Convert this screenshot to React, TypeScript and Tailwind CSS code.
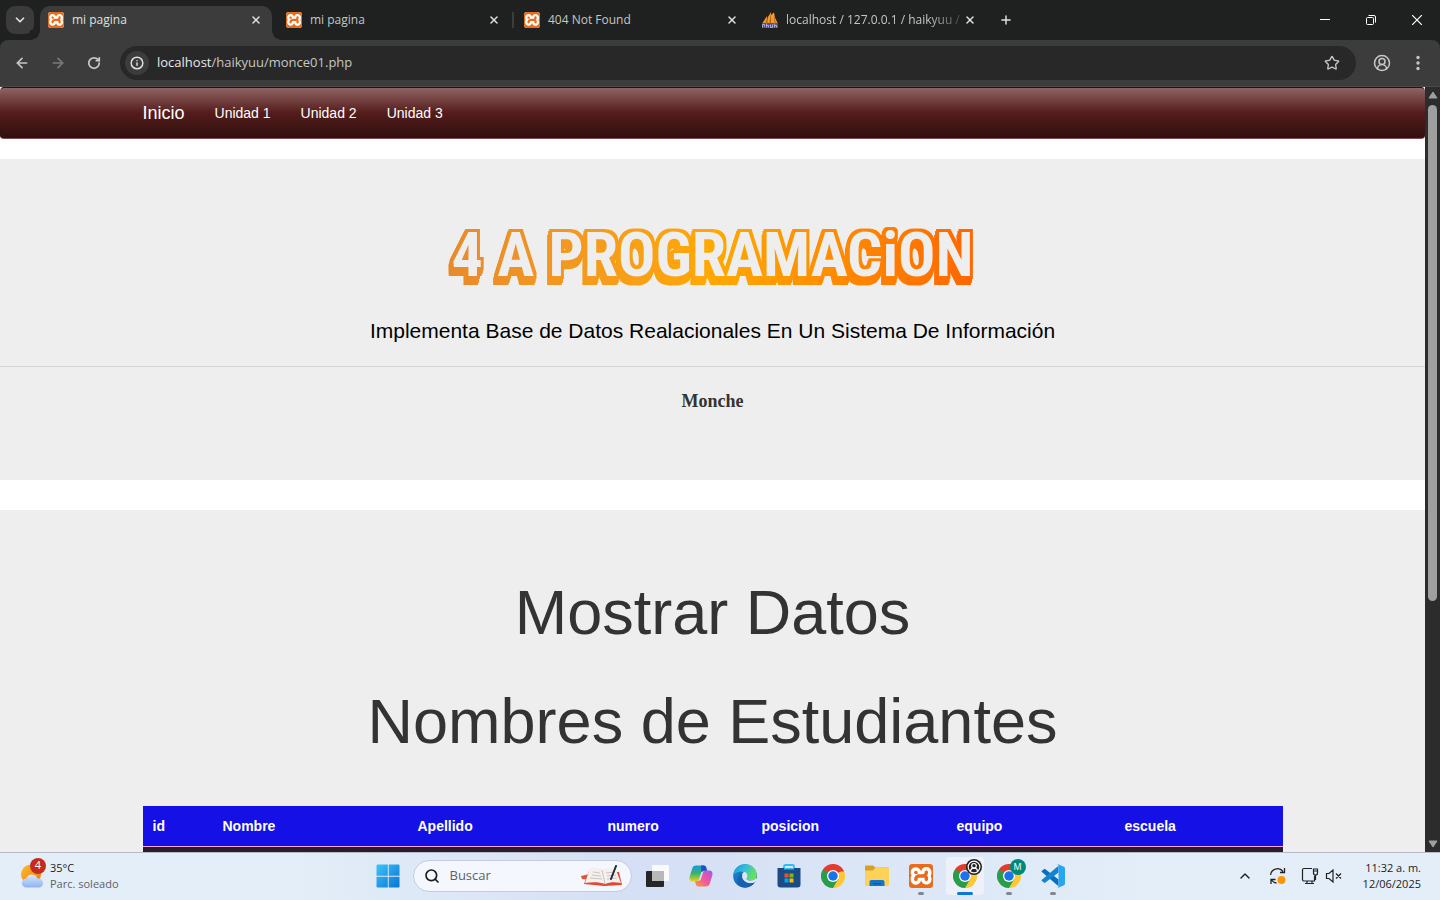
import type { ReactNode } from "react";
import {
  ArrowLeft,
  ArrowRight,
  ChevronDown,
  ChevronUp,
  CircleUserRound,
  Info,
  Plus,
  RotateCw,
  Search,
  Star,
  X,
} from "lucide-react";
import { SiXampp } from "react-icons/si";

const ui = "font-['Open_Sans','Noto_Sans',sans-serif]";

function XamppIcon({ className }: { className: string }) {
  return (
    <span className={`${className} block shrink-0 overflow-hidden rounded-[3px] bg-white`}>
      <SiXampp className="size-full scale-120 text-[#ea6c1b]" />
    </span>
  );
}

function SailIcon() {
  return (
    <svg viewBox="0 0 16 16" className="size-4 shrink-0">
      <path d="M.5 11 5 4l.5 7zM5 11l1-6 3-5v11zM9 11V3l3-2.500 1 5 2.500 5.500z" fill="#f29a2e" />
      <path d="m3.500 11 2-6v6zm4 0L9 0v11zm5 0L12 .5l1.500 10.500z" fill="#a8611a" />
      <path d="M0 11h16v5H0z" fill="#4d5092" />
      <path d="M.5 15.500v-3h2v2m2-3v4m0-2h2v2m2-3v3h2v-3m2 3v-4m0 2h2v2" fill="none" stroke="#a9abd3" />
    </svg>
  );
}

function ChromeIcon() {
  return (
    <svg viewBox="0 0 48 48" className="size-6">
      <path d="M24 24 3.200 12A24 24 0 0 1 44.800 12z" fill="#e33b2e" />
      <path d="M24 24 44.800 12A24 24 0 0 1 24 48z" fill="#fcc934" />
      <path d="M24 24v24A24 24 0 0 1 3.200 12z" fill="#2a9d4b" />
      <path d="M24 12h20.800a24 24 0 0 1 1.200 3H24z" fill="#e33b2e" />
      <path d="M34.400 30 24 48a24 24 0 0 0 3-.2l7.400-11z" fill="#fcc934" />
      <path d="M34.400 30 24 48l-5-12 9-4z" fill="#2a9d4b" />
      <path d="M13.600 30 3.200 12 16 15l1 10z" fill="#2a9d4b" />
      <circle cx="24" cy="24" r="12" fill="#fff" />
      <circle cx="24" cy="24" r="9.500" fill="#1a73e8" />
    </svg>
  );
}

function WindowsIcon() {
  return (
    <svg viewBox="0 0 24 24" className="size-6">
      <defs>
        <linearGradient id="win" x1="0" y1="0" x2="1" y2="1" gradientUnits="objectBoundingBox">
          <stop offset="0" stopColor="#3cc4f7" />
          <stop offset="1" stopColor="#0a73d3" />
        </linearGradient>
      </defs>
      <path
        d="M1.500.5h10.300v11.300H.5V1.500a1 1 0 0 1 1-1zM12.700.5h9.800a1 1 0 0 1 1 1v10.300H12.700zM.5 12.700h11.300v10.800H1.500a1 1 0 0 1-1-1zM12.700 12.700h10.800v9.800a1 1 0 0 1-1 1h-9.800z"
        fill="url(#win)"
      />
    </svg>
  );
}

function TaskViewIcon() {
  return (
    <svg viewBox="0 0 24 24" className="size-6">
      <rect x="1" y="7" width="18" height="16" rx="1" fill="#262626" />
      <rect x="7" y="1" width="17" height="16" rx="1" fill="#fafafa" />
      <path d="M7 7h12v10H7z" fill="#b8b8b8" />
    </svg>
  );
}

function CopilotIcon() {
  return (
    <svg viewBox="0 0 24 24" className="size-6">
      <defs>
        <linearGradient id="cpA" x1="0" y1="0" x2="0" y2="1">
          <stop offset="0" stopColor="#1699e0" />
          <stop offset=".5" stopColor="#35b56a" />
          <stop offset="1" stopColor="#f5cf21" />
        </linearGradient>
        <linearGradient id="cpB" x1="1" y1="0" x2="0" y2="1">
          <stop offset="0" stopColor="#a05be8" />
          <stop offset=".5" stopColor="#f0569d" />
          <stop offset="1" stopColor="#ff9a3c" />
        </linearGradient>
      </defs>
      <path d="M7.500 1.500h7c2 0 2.500 1 3 3l.6 2.500h-3c-2 0-2.800 1-3.300 2.700L10 15.500c-.6 1.700-1.500 2-3 2H4c-3 0-4-2-3.300-5L3 5c.7-2.500 2-3.500 4.500-3.500z" fill="url(#cpA)" />
      <path d="M12 1.500h2.500c2 0 2.500 1 3 3l.6 2.500h-3c-1.300 0-2.100.4-2.700 1.200z" fill="#1b50c8" />
      <path d="M16.500 22.500h-7c-2 0-2.500-1-3-3L6 17h3c2 0 2.700-1 3.200-2.700L14 8.500c.6-1.700 1.500-2 3-2h3c3 0 4 2 3.300 5L21 19c-.7 2.500-2 3.500-4.500 3.500z" fill="url(#cpB)" />
    </svg>
  );
}

function EdgeIcon() {
  return (
    <svg viewBox="0 0 24 24" className="size-6">
      <defs>
        <linearGradient id="edA" x1="0" y1="0" x2="1" y2=".4">
          <stop offset="0" stopColor="#2291dc" />
          <stop offset=".5" stopColor="#2fc0dc" />
          <stop offset="1" stopColor="#6be05a" />
        </linearGradient>
        <linearGradient id="edB" x1="0" y1="0" x2="1" y2="1">
          <stop offset="0" stopColor="#1b8ede" />
          <stop offset="1" stopColor="#114a8b" />
        </linearGradient>
      </defs>
      <circle cx="12" cy="12" r="11.800" fill="url(#edB)" />
      <path d="M.3 11C1 4.500 6 .2 12 .2c7 0 11.800 5 11.800 10.300 0 4-3 6-6 6-2.500 0-4.300-.8-4.300-1.800 0-.8 1.200-1.200 1.200-3C14.700 9 12 7.500 8.800 7.500 5 7.500 2 9 .3 11z" fill="url(#edA)" />
      <path d="M8.800 7.500c3.200 0 5.900 1.500 5.900 4.200 0 1.800-1.200 2.200-1.200 3 0 1 1.800 1.800 4.300 1.800 2 0 3.600-.7 4.800-2.200l1.500.2-2 4c-6 2.500-13.600-.5-13.600-6 0-2 1-3.700 2.500-4.500z" fill="#dbe5f7" />
      <path d="M9.500 9.500c-2 4.500 2 9.500 7.500 9.700 2 .1 3.500-.4 4.700-1.200C18 23.500 12 24 9 22.500 3 20 3.500 11.500 9.500 9.500z" fill="#1661b3" />
    </svg>
  );
}

function StoreIcon() {
  return (
    <svg viewBox="0 0 24 24" className="size-6">
      <path d="M7 6V2.500a1.500 1.500 0 0 1 1.500-1.500h7A1.500 1.500 0 0 1 17 2.500V6" fill="none" stroke="#32bdf2" strokeWidth="1.800" />
      <path d="M.5 4h23v16.500a3 3 0 0 1-3 3h-17a3 3 0 0 1-3-3z" fill="#1a4b84" />
      <path d="M7 4h10v1.500H7z" fill="#32bdf2" />
      <path d="M7.500 9.500h4v4h-4z" fill="#f25022" />
      <path d="M12.500 9.500h4v4h-4z" fill="#7fba00" />
      <path d="M7.500 14.500h4v4h-4z" fill="#00a4ef" />
      <path d="M12.500 14.500h4v4h-4z" fill="#ffb900" />
    </svg>
  );
}

function FolderIcon() {
  return (
    <svg viewBox="0 0 24 24" className="size-6">
      <path d="M0 2.500a1 1 0 0 1 1-1h7l2.500 2H23a1 1 0 0 1 1 1V10H0z" fill="#d9a020" />
      <path d="M0 6.500h8l2.500-3H23a1 1 0 0 1 1 1V21a1 1 0 0 1-1 1H1a1 1 0 0 1-1-1z" fill="#fdd258" />
      <path d="M4.500 22v-4a2 2 0 0 1 2-2h11a2 2 0 0 1 2 2v4z" fill="#1476c6" />
      <path d="M8 19h8v1.200H8z" fill="#0e5598" />
    </svg>
  );
}

function CodeIcon() {
  return (
    <svg viewBox="0 0 24 24" className="size-6">
      <path d="m1.600 6.300 1.500-1.200c.3-.2.700-.2 1 0L17.500 15.500v6.800L.9 8.100c-.5-.5-.5-1.200.7-1.800z" fill="#0a6ebd" />
      <path d="m1.600 17.500 1.500 1.300c.3.200.7.200 1 0L17.500 8.500V1.700L.9 15.800c-.5.500-.5 1.100.7 1.700z" fill="#1583d0" />
      <path d="M17.300.3 23 2.800c.6.300 1 .9 1 1.600v15.200c0 .7-.4 1.300-1 1.600l-5.700 2.500c-.6.300-1 0-1.300-.3.800.4 1.500-.2 1.500-1V1.600c0-.9-.8-1.400-1.500-1 .3-.4.800-.6 1.300-.3z" fill="#2aa5f0" />
    </svg>
  );
}

function BookIcon() {
  return (
    <svg viewBox="0 0 42 22" className="h-[22px] w-[42px]">
      <path d="m0 11 9-2 6 3-7 3-7-1z" fill="#e0533a" />
      <path d="m8 6 30 1 3 13-18 1-20-2z" fill="#e2492f" />
      <path d="M9 3c5-1 9 0 12 2 4-2 10-2 14 0l5 13c-6-1-11-1-16 1-5-2-13-2-20-1z" fill="#f4f0ec" />
      <path d="m21 5 3 14M12 7l7 1M11 10l9 1M9 13l12 1M25 8l8-1M26 11l9-1M26 14l10-1" fill="none" stroke="#c9c4ca" />
      <path d="m35 1-5 13" stroke="#26282e" strokeWidth="2" strokeLinecap="round" />
    </svg>
  );
}

function WeatherIcon() {
  return (
    <svg viewBox="0 0 24 24" className="size-6">
      <defs>
        <linearGradient id="sun" x1="0" y1="0" x2="1" y2="1">
          <stop offset="0" stopColor="#fdbb2c" />
          <stop offset="1" stopColor="#f1780f" />
        </linearGradient>
        <linearGradient id="cloud" x1="0" y1="0" x2="0" y2="1">
          <stop offset="0" stopColor="#d6e6fc" />
          <stop offset="1" stopColor="#8fb3ee" />
        </linearGradient>
      </defs>
      <circle cx="11" cy="10.500" r="10" fill="url(#sun)" />
      <path d="M6.500 23.500a4.500 4.500 0 0 1-.3-9 6 6 0 0 1 11.300 0h1a4.500 4.500 0 0 1 0 9z" fill="url(#cloud)" />
    </svg>
  );
}

const tabs = [
  { title: "mi pagina", icon: <XamppIcon className="size-4" /> },
  { title: "mi pagina", icon: <XamppIcon className="size-4" /> },
  { title: "404 Not Found", icon: <XamppIcon className="size-4" /> },
  { title: "localhost / 127.0.0.1 / haikyuu /", icon: <SailIcon /> },
];

function TabStrip() {
  return (
    <header className="flex h-10 shrink-0 items-start bg-[#1f2120] pl-1.5 text-[#dfe1df]">
      <button aria-label="Buscar pestañas" className="mt-1.5 grid size-7 place-items-center rounded-[9px] bg-[#3a3b3a]">
        <ChevronDown className="size-3.5" strokeWidth={3} />
      </button>
      <div className="ml-1.5 flex h-10 gap-1.5 pt-1.5">
        {tabs.map((tab, i) => (
          <div
            key={i}
            className={`relative flex w-[232px] items-center px-2 pb-1.5 ${
              i === 0 ? "rounded-t-[10px] bg-[#3c3c3c]" : ""
            }`}
          >
            {i === 0 && (
              <>
                <span className="absolute bottom-0 -left-2.5 size-2.5 bg-[radial-gradient(circle_at_0_0,#1f2120_10px,#3c3c3c_10px)]" />
                <span className="absolute -right-2.5 bottom-0 size-2.5 bg-[radial-gradient(circle_at_100%_0,#1f2120_10px,#3c3c3c_10px)]" />
              </>
            )}
            {i === 2 && <span className="absolute top-1.5 -left-1 h-4 w-0.5 bg-[#3c3d3c]" />}
            {tab.icon}
            <span
              className={`ml-2 flex-1 text-xs whitespace-nowrap ${
                i === 3 ? "[mask-image:linear-gradient(to_right,#000_80%,#0003)]" : ""
              } ${i === 0 ? "" : "text-[#c4c7c4]"}`}
            >
              {tab.title}
            </span>
            <button aria-label="Cerrar pestaña" className="grid size-4 place-items-center">
              <X className="size-3" strokeWidth={3} />
            </button>
          </div>
        ))}
      </div>
      <button aria-label="Nueva pestaña" className="grid h-10 w-10 place-items-center">
        <Plus className="size-3.5" strokeWidth={2.5} />
      </button>
      <div className="ml-auto flex text-white">
        <button aria-label="Minimizar" className="grid h-10 w-[46px] place-items-center">
          <svg viewBox="0 0 10 10" className="size-2.5"><path d="M0 4.500h10" stroke="currentColor" /></svg>
        </button>
        <button aria-label="Restaurar" className="grid h-10 w-[46px] place-items-center">
          <svg viewBox="0 0 10 10" className="size-2.5" fill="none" stroke="currentColor">
            <rect x=".5" y="2.500" width="7" height="7" rx="1" />
            <path d="M2.500.5H8a1.500 1.500 0 0 1 1.500 1.500v5.500" />
          </svg>
        </button>
        <button aria-label="Cerrar" className="grid h-10 w-[46px] place-items-center">
          <svg viewBox="0 0 10 10" className="size-2.5"><path d="m0 0 10 10M10 0 0 10" stroke="currentColor" strokeWidth="1.200" /></svg>
        </button>
      </div>
    </header>
  );
}

function Toolbar() {
  return (
    <div className="shrink-0 bg-[#1f2120]">
      <div className="flex h-[47px] items-center rounded-t-lg border-b border-[#4a4a4a] bg-[#3c3c3c] px-1 text-[#c7c7c7]">
        <button aria-label="Atrás" className="grid size-9 place-items-center">
          <ArrowLeft className="size-4" strokeWidth={2.5} />
        </button>
        <button aria-label="Adelante" className="grid size-9 place-items-center text-[#7b7b7b]">
          <ArrowRight className="size-4" strokeWidth={2.5} />
        </button>
        <button aria-label="Recargar" className="grid size-9 place-items-center">
          <RotateCw className="size-3.5" strokeWidth={3} />
        </button>
        <div className="ml-2 flex h-[34px] flex-1 items-center rounded-full bg-[#282828] pl-[5px]">
          <button aria-label="Información del sitio" className="grid size-6 place-items-center rounded-full bg-[#3c3c3c]">
            <Info className="size-3.5 text-[#e0e0e0]" strokeWidth={2.5} />
          </button>
          <p className="ml-2 flex-1 text-[13px] text-[#c7c7c7]">
            <span className="text-[#e8e8e8]">localhost</span>/haikyuu/monce01.php
          </p>
          <button aria-label="Agregar a marcadores" className="mr-2 grid size-8 place-items-center">
            <Star className="size-4" strokeWidth={2} />
          </button>
        </div>
        <button aria-label="Perfil" className="ml-2 grid size-9 place-items-center">
          <CircleUserRound className="size-[18px]" strokeWidth={2} />
        </button>
        <button aria-label="Menú" className="grid size-9 place-items-center">
          <svg viewBox="0 0 4 16" className="h-4 w-1" fill="currentColor">
            <circle cx="2" cy="2.500" r="1.700" />
            <circle cx="2" cy="8" r="1.700" />
            <circle cx="2" cy="13.500" r="1.700" />
          </svg>
        </button>
      </div>
    </div>
  );
}

const columns = [
  { name: "id", width: "w-[70px]" },
  { name: "Nombre", width: "w-[195px]" },
  { name: "Apellido", width: "w-[190px]" },
  { name: "numero", width: "w-[154px]" },
  { name: "posicion", width: "w-[195px]" },
  { name: "equipo", width: "w-[168px]" },
  { name: "escuela", width: "w-[168px]" },
];

function Page() {
  return (
    <main className="min-w-0 flex-1 overflow-hidden bg-white font-['Liberation_Sans',Arial,sans-serif] text-[#333]">
      <nav className="rounded border border-x-transparent border-t-[#2a1010] border-b-[#7d4b4b] bg-linear-to-b from-[#8f6363] via-[#541c1c] to-[#30100f] text-white">
        <div className="mx-auto flex h-[50px] w-full max-w-[1140px] items-center gap-[30px] text-sm">
          <a href="#inicio" className="text-lg">Inicio</a>
          <a href="#unidad1">Unidad 1</a>
          <a href="#unidad2">Unidad 2</a>
          <a href="#unidad3">Unidad 3</a>
        </div>
      </nav>

      <section className="mt-5 bg-[#eee] pt-[68px] pb-16 text-center">
        <svg className="absolute size-0" aria-hidden="true">
          <filter id="extrude" x="-5%" y="-20%" width="110%" height="150%" colorInterpolationFilters="sRGB">
            <feMorphology in="SourceGraphic" operator="dilate" radius="3" result="rim" />
            <feOffset in="rim" dx="-1" dy="2" result="s1" />
            <feOffset in="rim" dx="-1" dy="4" result="s2" />
            <feOffset in="rim" dx="-2" dy="6" result="s3" />
            <feFlood floodColor="#eeeeee" />
            <feComposite in2="SourceAlpha" operator="in" result="face" />
            <feMerge>
              <feMergeNode in="s3" />
              <feMergeNode in="s2" />
              <feMergeNode in="s1" />
              <feMergeNode in="rim" />
              <feMergeNode in="face" />
            </feMerge>
          </filter>
        </svg>
        <h1 className="mx-auto w-fit bg-linear-to-r from-[#e88a2a] via-[#ffa800] to-[#ff6600] bg-clip-text font-['Liberation_Sans_Narrow','Roboto_Condensed','Open_Sans_Condensed','DejaVu_Sans_Condensed',sans-serif] text-[62px] leading-[55px] font-bold text-transparent [filter:url(#extrude)]">
          4 A PROGRAMACiON
        </h1>
        <p className="mt-[34px] text-[21px] leading-[30px] text-black">
          Implementa Base de Datos Realacionales En Un Sistema De Información
        </p>
        <hr className="mt-5 border-[#d5d5d5]" />
        <p className="mt-5 font-['Liberation_Serif',serif] text-lg leading-[29px] font-bold">Monche</p>
      </section>

      <section className="mt-[30px] bg-[#eee] pt-[68px] text-center">
        <h1 className="text-[63px] leading-[69px]">Mostrar Datos</h1>
        <h1 className="mt-10 text-[63px] leading-[69px]">Nombres de Estudiantes</h1>
        <table className="mx-auto mt-[50px] w-full max-w-[1140px] table-fixed text-left text-sm">
          <thead className="border-b border-[#f7a6e6] bg-[#1410e6] text-white">
            <tr>
              {columns.map((c) => (
                <th key={c.name} className={`${c.width} px-2.5 py-2.5 font-bold`}>
                  {c.name}
                </th>
              ))}
            </tr>
          </thead>
          <tbody className="bg-[#2b1b2b]">
            <tr>
              {columns.map((c) => (
                <td key={c.name} className="h-10" />
              ))}
            </tr>
          </tbody>
        </table>
      </section>
    </main>
  );
}

function ScrollTrack() {
  return (
    <div aria-hidden="true" className="flex w-[15px] shrink-0 flex-col items-center bg-[#2c2c2c] py-1">
      <svg viewBox="0 0 10 8" className="h-2 w-2.5"><path d="M5 1 9 7H1z" fill="#9f9f9f" stroke="#9f9f9f" strokeLinejoin="round" /></svg>
      <div className="my-1.5 min-h-0 w-[9px] flex-1">
        <div className="h-[68%] rounded-full bg-[#9f9f9f]" />
      </div>
      <svg viewBox="0 0 10 8" className="h-2 w-2.5"><path d="M5 7 1 1h8z" fill="#9f9f9f" stroke="#9f9f9f" strokeLinejoin="round" /></svg>
    </div>
  );
}

function TaskButton({
  label,
  children,
  state,
}: {
  label: string;
  children: ReactNode;
  state?: "open" | "active";
}) {
  return (
    <button
      aria-label={label}
      className={`relative mx-[3px] grid h-[38px] w-[38px] place-items-center rounded ${
        state === "active" ? "bg-[#eef1f9]" : ""
      }`}
    >
      {children}
      {state === "active" && <span className="absolute bottom-0 h-[3px] w-4 rounded-full bg-[#0b77d8]" />}
      {state === "open" && <span className="absolute bottom-0 h-[3px] w-1.5 rounded-full bg-[#83868e]" />}
    </button>
  );
}

function Taskbar() {
  return (
    <footer className="grid h-12 shrink-0 grid-cols-[1fr_auto_1fr] items-center border-t border-[#b3bcc6] bg-linear-to-r from-[#e3eef8] from-20% via-[#d5dff5] via-45% to-[#e3eef9] to-80% pb-0.5 text-xs text-[#1c1c1c]">
      <div className="flex items-center gap-1.5 pl-5">
        <div className="relative">
          <WeatherIcon />
          <span className="absolute -top-1.5 left-2.5 grid size-4 place-items-center rounded-full bg-[#c42b1c] text-[11px] text-white">
            4
          </span>
        </div>
        <div className="text-[11px] leading-4">
          <p>35°C</p>
          <p className="text-[#5d6167]">Parc. soleado</p>
        </div>
      </div>

      <div className="flex items-center">
        <TaskButton label="Inicio">
          <WindowsIcon />
        </TaskButton>
        <label className="mx-[3px] flex h-8 w-[219px] items-center rounded-full border border-[#c3cce0] bg-[#f4f7fd] pr-2 pl-2.5">
          <Search className="size-4 shrink-0" strokeWidth={2.5} />
          <input
            type="text"
            aria-label="Buscar"
            placeholder="Buscar"
            className="ml-2.5 min-w-0 flex-1 bg-transparent text-[13px] outline-none placeholder:text-[#5d6167]"
          />
          <BookIcon />
        </label>
        <TaskButton label="Vista de tareas"><TaskViewIcon /></TaskButton>
        <TaskButton label="Copilot"><CopilotIcon /></TaskButton>
        <TaskButton label="Edge"><EdgeIcon /></TaskButton>
        <TaskButton label="Store"><StoreIcon /></TaskButton>
        <TaskButton label="Chrome"><ChromeIcon /></TaskButton>
        <TaskButton label="Explorador"><FolderIcon /></TaskButton>
        <TaskButton label="XAMPP" state="open"><XamppIcon className="size-6" /></TaskButton>
        <TaskButton label="Chrome, perfil" state="active">
          <ChromeIcon />
          <span className="absolute top-0.5 right-0.5 grid size-4 place-items-center rounded-full bg-[#222]">
            <CircleUserRound className="size-3.5 text-white" strokeWidth={2} />
          </span>
        </TaskButton>
        <TaskButton label="Chrome, M" state="open">
          <ChromeIcon />
          <span className="absolute top-0.5 right-0.5 grid size-4 place-items-center rounded-full bg-[#00897b] text-[9px] text-white">
            M
          </span>
        </TaskButton>
        <TaskButton label="Visual Studio Code" state="open"><CodeIcon /></TaskButton>
      </div>

      <div className="flex items-center justify-end pr-[19px]">
        <ChevronUp className="mr-4 size-4" strokeWidth={2} />
        <svg viewBox="0 0 18 18" className="mr-3.5 size-[18px]" fill="none" stroke="#222" strokeWidth="1.300">
          <path d="M1.500 8A7 7 0 0 1 14 4.500M15.500 1v4.500H11M2 17v-4.500h4.500M2.500 13a7 7 0 0 0 5 3" />
          <circle cx="12.500" cy="13" r="4" fill="#ff9500" stroke="none" />
        </svg>
        <svg viewBox="0 0 18 18" className="mr-1.5 size-[18px]" fill="none" stroke="#222" strokeWidth="1.200">
          <path d="M11 1.500H3A1.500 1.500 0 0 0 1.500 3v9.500A1.500 1.500 0 0 0 3 14h10.500V9M6 14v2.500m5-2.500v2.500M4 16.500h9" />
          <path d="M12.500 2h4v4a2 2 0 0 1-4 0zM12.500 4h4M14.500 8v5" />
        </svg>
        <svg viewBox="0 0 18 18" className="size-[18px]" fill="none" stroke="#222" strokeWidth="1.200">
          <path d="M1.500 6.500H4l4-3.500v12l-4-3.500H1.500zM11 6.500l5 5m0-5-5 5" />
        </svg>
        <div className="ml-5 text-right text-[11px] leading-4">
          <p>11:32 a. m.</p>
          <p>12/06/2025</p>
        </div>
      </div>
    </footer>
  );
}

export default function App() {
  return (
    <div className={`flex h-screen flex-col overflow-hidden ${ui}`}>
      <TabStrip />
      <Toolbar />
      <div className="flex min-h-0 flex-1">
        <Page />
        <ScrollTrack />
      </div>
      <Taskbar />
    </div>
  );
}
